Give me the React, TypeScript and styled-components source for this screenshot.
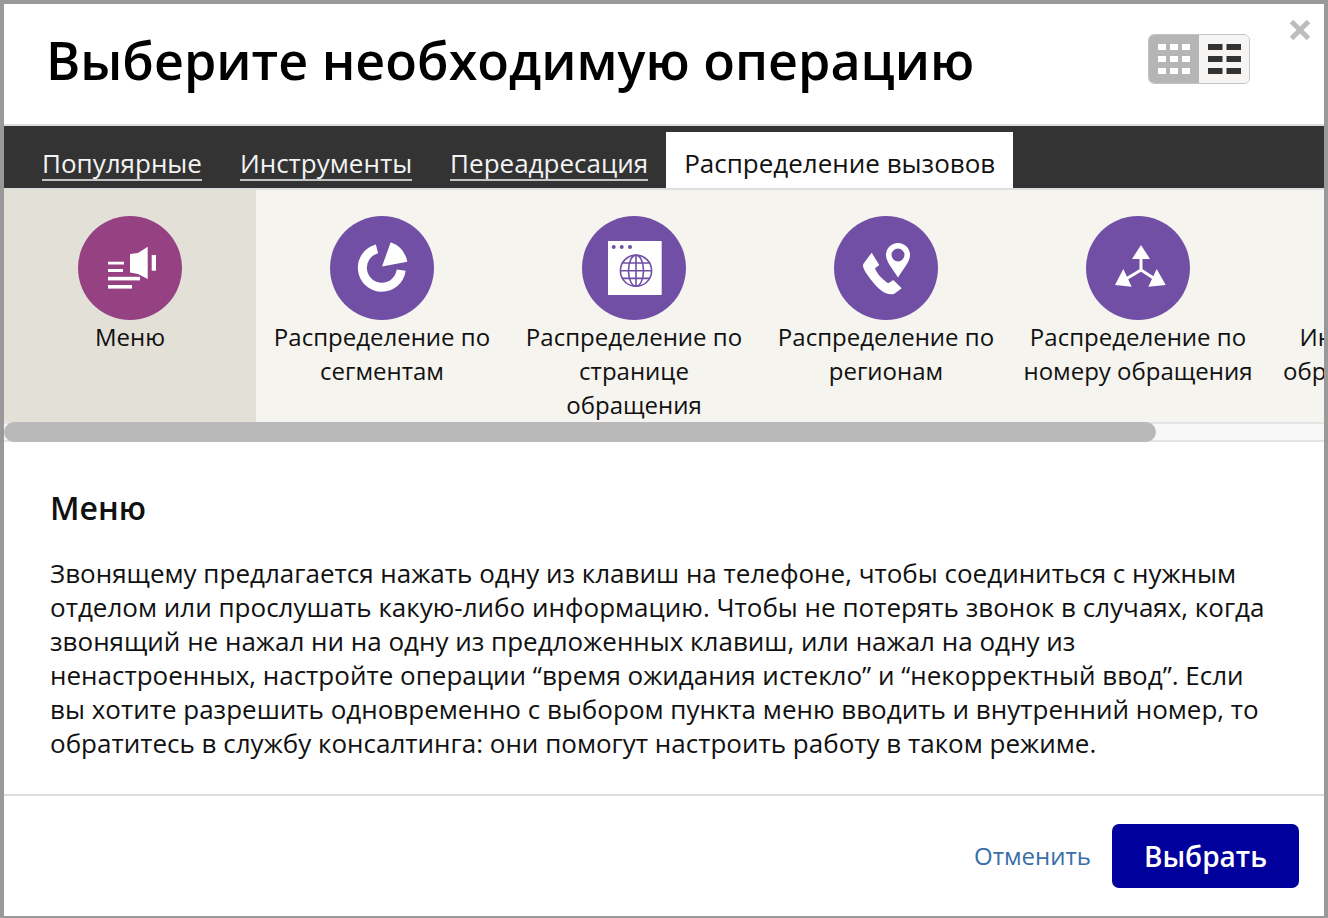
import React from "react";
import styled, { createGlobalStyle } from "styled-components";

const Global = createGlobalStyle`
  html, body { margin: 0; padding: 0; background: #fff; }
  body { font-family: "Open Sans", "Noto Sans", sans-serif; color: #111; }
  * { box-sizing: border-box; }
`;

const Modal = styled.div`
  position: relative;
  width: 1328px;
  height: 918px;
  border: solid #999;
  border-width: 4px 4px 2px 4px;
  display: flex;
  flex-direction: column;
  overflow: hidden;
  background: #fff;
`;
const Header = styled.header`
  height: 122px;
  flex: none;
  border-bottom: 2px solid #ddd;
  display: flex;
  align-items: center;
  justify-content: space-between;
  padding: 0 74px 8px 42px;
`;
const Title = styled.h1`
  margin: 0;
  font-size: 52px;
  font-weight: 600;
  line-height: 70px;
  color: #000;
`;
const ViewToggle = styled.div`
  width: 102px;
  height: 50px;
  display: flex;
  border-radius: 6px;
  overflow: hidden;
  border: 1px solid #c4c4c4;
  margin-bottom: 2px;
`;
const ToggleSide = styled.div<{ $active?: boolean }>`
  flex: 1;
  display: flex;
  align-items: center;
  justify-content: center;
  background: ${(p) => (p.$active ? "#b5b5b5" : "#f6f5f3")};
`;
const Close = styled.button`
  position: absolute;
  top: 15px;
  right: 13px;
  width: 22px;
  height: 22px;
  padding: 0;
  border: 0;
  background: none;
  display: flex;
`;
const TabBar = styled.nav`
  height: 62px;
  flex: none;
  background: #333;
  display: flex;
  align-items: flex-end;
  padding-left: 38px;
`;
const TabLink = styled.a`
  font-size: 26px;
  line-height: 32px;
  color: #f3f3f3;
  border-bottom: 2px solid #c4c4c4;
  margin: 0 38px 7px 0;
`;
const ActiveTab = styled.a`
  margin-left: -20px;
  height: 56px;
  padding: 15px 18px 0 18px;
  background: #fff;
  color: #111;
  font-size: 26px;
  line-height: 32px;
`;
const Tiles = styled.div`
  height: 234px;
  flex: none;
  border-top: 2px solid #ddd;
  background: #f5f4ef;
  display: flex;
  overflow: hidden;
`;
const Tile = styled.div<{ $selected?: boolean }>`
  flex: 0 0 252px;
  padding: 26px 10px 0;
  display: flex;
  flex-direction: column;
  align-items: center;
  background: ${(p) => (p.$selected ? "#e3e0d8" : "transparent")};
`;
const Circle = styled.div<{ $selected?: boolean }>`
  width: 104px;
  height: 104px;
  flex: none;
  border-radius: 50%;
  background: ${(p) => (p.$selected ? "#964282" : "#714fa5")};
  & svg { display: block; }
`;
const TileLabel = styled.div`
  font-size: 24px;
  line-height: 34px;
  text-align: center;
  color: #111;
  max-width: 230px;
`;
const ScrollTrack = styled.div`
  height: 20px;
  flex: none;
  background: #f8f8f8;
  border: solid #e4e4e4;
  border-width: 2px 0;
  position: relative;
`;
const ScrollThumb = styled.div`
  position: absolute;
  left: 0;
  top: -2px;
  width: 1152px;
  height: 20px;
  border-radius: 10px;
  background: #b9b9b9;
`;
const Description = styled.section`
  flex: 1;
  padding: 46px 46px 0;
  border-bottom: 2px solid #ddd;
`;
const DescTitle = styled.h2`
  margin: 0 0 28px;
  font-size: 32px;
  line-height: 40px;
  font-weight: 600;
  color: #111;
`;
const DescText = styled.p`
  margin: 0;
  font-size: 26px;
  line-height: 34px;
  color: #111;
`;
const Footer = styled.footer`
  height: 120px;
  flex: none;
  display: flex;
  align-items: center;
  justify-content: flex-end;
  padding: 0 25px 0 0;
`;
const Cancel = styled.a`
  font-size: 24px;
  color: #3a6ea8;
  margin: 0 21px 2px 0;
`;
const Primary = styled.button`
  width: 187px;
  height: 64px;
  border: 0;
  border-radius: 7px;
  background: #00009c;
  color: #fff;
  font: 600 28px "Open Sans", sans-serif;
`;

const P = "#714fa5";

const IconSvg: React.FC<{ children: React.ReactNode }> = ({ children }) => (
  <svg width="104" height="104" viewBox="0 0 104 104" fill="#fff">{children}</svg>
);

const MenuIcon = () => (
  <IconSvg>
    <rect x="30" y="45.7" width="16" height="2.8" />
    <rect x="30" y="53" width="15" height="3" />
    <rect x="30" y="60.8" width="32" height="3.6" />
    <rect x="30" y="69" width="24" height="3.6" />
    <path d="M52 38 L60 37 L69.7 30.7 V63 L60 58 L52 56.5 Z" />
    <rect x="73.7" y="39" width="4.3" height="15.7" />
  </IconSvg>
);
const PieIcon = () => (
  <IconSvg>
    <path d="M47 32.8 A19.5 19.5 0 1 0 71.2 54.2" fill="none" stroke="#fff" strokeWidth="9" />
    <path d="M52 50.5 L60.7 26.3 A26 26 0 0 1 77.3 45.7 Z" />
  </IconSvg>
);
const PageIcon = () => (
  <IconSvg>
    <rect x="26" y="25" width="53.7" height="54" />
    <circle cx="31.7" cy="31" r="2" fill={P} />
    <circle cx="39.7" cy="31" r="2" fill={P} />
    <circle cx="48" cy="31" r="2" fill={P} />
    <g fill="none" stroke={P} strokeWidth="1.6">
      <circle cx="54" cy="54.7" r="15.6" />
      <ellipse cx="54" cy="54.7" rx="7.5" ry="15.6" />
      <path d="M54 39 V70.3 M38.4 54.7 H69.6 M41 47 H67 M41 62.4 H67" />
    </g>
  </IconSvg>
);
const RegionIcon = () => (
  <IconSvg>
    <path fillRule="evenodd" d="M64 27 A12 12 0 0 1 76 39 C76 46 69 53 64 61.5 C59 53 52 46 52 39 A12 12 0 0 1 64 27 Z M64 32.5 A6.5 6.5 0 1 0 64 45.5 A6.5 6.5 0 1 0 64 32.5 Z" />
    <path d="M37.7 36.7 L45.3 49 L41 52.3 C43 58 49 64 54.3 67.3 L59.3 64 L67.7 72.3 L60 78 C52 80 44 73 38 65 C31 56 27 50 30 47 Z" />
  </IconSvg>
);
const ArrowsIcon = () => (
  <IconSvg>
    <path d="M55 29 L64 43 H46 Z M29 69 L37.3 53 L45.7 70.7 Z M79.7 69 L70.7 53 L62.3 70.7 Z" />
    <path d="M55 42 V54 M55 54 L40 63 M55 54 L69 63" fill="none" stroke="#fff" strokeWidth="3" />
  </IconSvg>
);

const GridIcon = () => (
  <svg width="32" height="30" viewBox="0 0 32 30" fill="#fff">
    {[0, 12, 24].map((y) =>
      [0, 12, 24].map((x) => <rect key={`${x}-${y}`} x={x} y={y} width="8" height="6" />)
    )}
  </svg>
);
const ListIcon = () => (
  <svg width="33" height="30" viewBox="0 0 33 30" fill="#333">
    {[0, 12, 24].map((y) =>
      [0, 18.5].map((x) => <rect key={`${x}-${y}`} x={x} y={y} width="14.5" height="6" />)
    )}
  </svg>
);

const tiles = [
  { label: "Меню", icon: <MenuIcon />, selected: true },
  { label: "Распределение по сегментам", icon: <PieIcon /> },
  { label: "Распределение по странице обращения", icon: <PageIcon /> },
  { label: "Распределение по регионам", icon: <RegionIcon /> },
  { label: "Распределение по номеру обращения", icon: <ArrowsIcon /> },
  { label: "Интерактивная обработка вызова", icon: null },
];

export default function App() {
  return (
    <Modal>
      <Global />
      <Header>
        <Title>Выберите необходимую операцию</Title>
        <ViewToggle>
          <ToggleSide $active><GridIcon /></ToggleSide>
          <ToggleSide><ListIcon /></ToggleSide>
        </ViewToggle>
      </Header>
      <Close aria-label="Закрыть">
        <svg width="22" height="22" viewBox="0 0 22 22">
          <path d="M2.5 2.5 L19.5 19.5 M19.5 2.5 L2.5 19.5" stroke="#bdbdbd" strokeWidth="5" />
        </svg>
      </Close>
      <TabBar>
        <TabLink>Популярные</TabLink>
        <TabLink>Инструменты</TabLink>
        <TabLink>Переадресация</TabLink>
        <ActiveTab>Распределение вызовов</ActiveTab>
      </TabBar>
      <Tiles>
        {tiles.map((t) => (
          <Tile key={t.label} $selected={t.selected}>
            <Circle $selected={t.selected}>{t.icon}</Circle>
            <TileLabel>{t.label}</TileLabel>
          </Tile>
        ))}
      </Tiles>
      <ScrollTrack><ScrollThumb /></ScrollTrack>
      <Description>
        <DescTitle>Меню</DescTitle>
        <DescText>
          Звонящему предлагается нажать одну из клавиш на телефоне, чтобы соединиться с нужным отделом или прослушать какую-либо информацию. Чтобы не потерять звонок в случаях, когда звонящий не нажал ни на одну из предложенных клавиш, или нажал на одну из ненастроенных, настройте операции “время ожидания истекло” и “некорректный ввод”. Если вы хотите разрешить одновременно с выбором пункта меню вводить и внутренний номер, то обратитесь в службу консалтинга: они помогут настроить работу в таком режиме.
        </DescText>
      </Description>
      <Footer>
        <Cancel>Отменить</Cancel>
        <Primary>Выбрать</Primary>
      </Footer>
    </Modal>
  );
}
